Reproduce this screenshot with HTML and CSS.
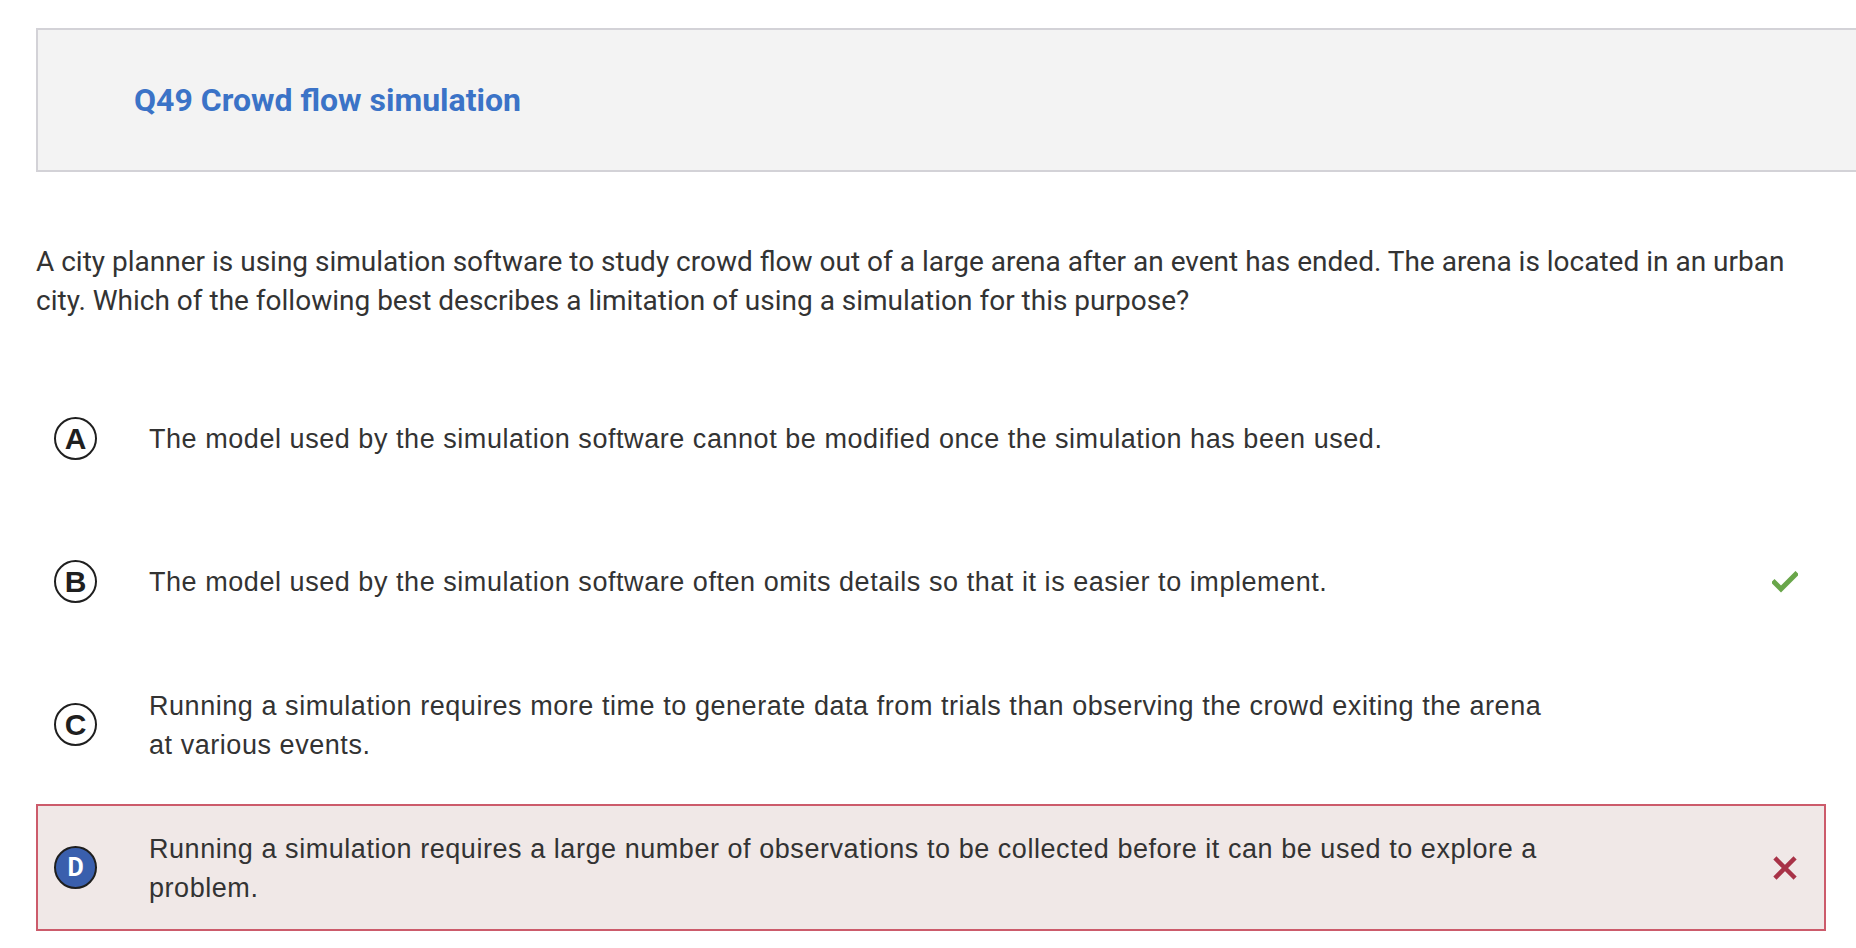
FILE: index.html
```html
<!DOCTYPE html>
<html lang="en">
<head>
<meta charset="utf-8">
<title>Q49 Crowd flow simulation</title>
<link rel="stylesheet" href="styles.css">
</head>
<body>
<main class="page">
  <header class="q-header">
    <h1 class="q-title">Q49 Crowd flow simulation</h1>
  </header>
  <p class="q-stem">A city planner is using simulation software to study crowd flow out of a large arena after an event has ended. The arena is located in an urban city. Which of the following best describes a limitation of using a simulation for this purpose?</p>
  <ol class="options">
    <li class="option">
      <span class="badge">A</span>
      <span class="opt-text">The model used by the simulation software cannot be modified once the simulation has been used.</span>
    </li>
    <li class="option">
      <span class="badge">B</span>
      <span class="opt-text">The model used by the simulation software often omits details so that it is easier to implement.</span>
      <span class="mark">
        <svg class="icon-check" width="26" height="22" viewBox="0 0 26 22"><polyline points="2.5,11.5 9,18 23.5,3.5" fill="none" stroke="#69a64a" stroke-width="5" stroke-linecap="square" stroke-linejoin="miter"/></svg>
      </span>
    </li>
    <li class="option">
      <span class="badge">C</span>
      <span class="opt-text">Running a simulation requires more time to generate data from trials than observing the crowd exiting the arena at various events.</span>
    </li>
    <li class="option option-wrong">
      <span class="badge badge-selected">D</span>
      <span class="opt-text">Running a simulation requires a large number of observations to be collected before it can be used to explore a problem.</span>
      <span class="mark">
        <svg class="icon-x" width="26" height="24" viewBox="0 0 26 24"><path d="M4.5 3.5 L21.5 20.5 M21.5 3.5 L4.5 20.5" fill="none" stroke="#a83247" stroke-width="4.5" stroke-linecap="square"/></svg>
      </span>
    </li>
  </ol>
</main>
</body>
</html>
```
FILE: styles.css
```css
html, body {
  margin: 0;
  padding: 0;
  background: #ffffff;
  overflow: hidden;
}

.page {
  padding-left: 36px;
  padding-top: 28px;
}

.q-header {
  box-sizing: border-box;
  height: 144px;
  background: #f3f3f3;
  border: 2px solid #d3d2d7;
  border-right: none;
  display: flex;
  align-items: center;
  padding-left: 96px;
}

.q-title {
  margin: 0;
  font-family: Roboto, "Liberation Sans", sans-serif;
  font-weight: 700;
  font-size: 32px;
  color: #3b73c7;
  line-height: 1.2;
}

.q-stem {
  margin: 70px 30px 0 0;
  font-family: Roboto, "Liberation Sans", sans-serif;
  font-size: 28px;
  line-height: 39px;
  color: #333333;
}

.options {
  list-style: none;
  margin: 55px 0 0 0;
  padding: 0;
  width: 1790px;
}

.option {
  box-sizing: border-box;
  height: 127px;
  margin-bottom: 16px;
  border: 2px solid transparent;
  display: flex;
  align-items: center;
  font-family: "Liberation Sans", Arial, sans-serif;
  font-size: 27px;
  letter-spacing: 0.55px;
  line-height: 39px;
  color: #333333;
}

.option-wrong {
  background: #f0e8e7;
  border-color: #cc5b6b;
}

.badge {
  box-sizing: border-box;
  flex: 0 0 43px;
  width: 43px;
  height: 43px;
  margin-left: 16px;
  border: 2px solid #1f1f1f;
  border-radius: 50%;
  display: flex;
  align-items: center;
  justify-content: center;
  font-family: "Liberation Sans", Arial, sans-serif;
  font-weight: 700;
  font-size: 30px;
  letter-spacing: 0;
  line-height: 1;
  color: #1f1f1f;
}

.badge-selected {
  background: #3a5fad;
  color: #ffffff;
  font-family: Roboto, "Liberation Sans", sans-serif;
  font-size: 25px;
}

.opt-text {
  flex: 0 1 1400px;
  margin-left: 52px;
  padding-top: 2px;
}

.mark {
  margin-left: auto;
  margin-right: 26px;
  display: flex;
  align-items: center;
}
```
